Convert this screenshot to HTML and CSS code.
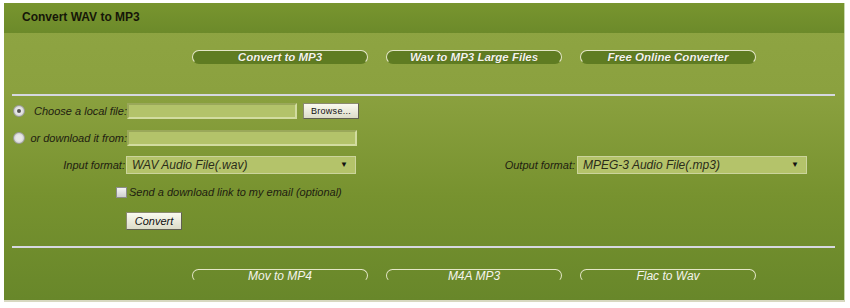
FILE: index.html
```html
<!DOCTYPE html>
<html lang="en">
<head>
    <meta charset="UTF-8">
    <title>Convert WAV to MP3</title>
    <link rel="stylesheet" href="styles.css">
</head>
<body>
    <div class="panel">
        <div class="header">Convert WAV to MP3</div>

        <div class="nav nav-top">
            <a href="#" class="pill">Convert to MP3</a>
            <a href="#" class="pill">Wav to MP3 Large Files</a>
            <a href="#" class="pill">Free Online Converter</a>
        </div>

        <div class="rule"></div>

        <div class="form">
            <div class="row row-file">
                <span class="radio checked"></span>
                <span class="lbl">Choose a local file:</span>
                <span class="field short"></span>
                <span class="btn browse">Browse...</span>
            </div>
            <div class="row row-url">
                <span class="radio"></span>
                <span class="lbl">or download it from:</span>
                <span class="field long"></span>
            </div>
            <div class="row row-format">
                <span class="lbl fmt">Input format:</span>
                <span class="select">WAV Audio File(.wav)<i>&#9660;</i></span>
                <span class="lbl out">Output format:</span>
                <span class="select">MPEG-3 Audio File(.mp3)<i>&#9660;</i></span>
            </div>
            <div class="row row-check">
                <span class="check"></span>
                <span class="lbl">Send a download link to my email (optional)</span>
            </div>
            <div class="row row-submit">
                <span class="btn convert">Convert</span>
            </div>
        </div>

        <div class="rule"></div>

        <div class="nav nav-bottom">
            <a href="#" class="pill">Mov to MP4</a>
            <a href="#" class="pill">M4A MP3</a>
            <a href="#" class="pill">Flac to Wav</a>
        </div>
    </div>
</body>
</html>
```
FILE: styles.css
```css
body {
    margin: 0;
    background-color: #ffffff;
    font-family: 'Liberation Sans', Arial, sans-serif;
}

.panel {
    width: 841px;
    height: 299px;
    margin: 3px 0 0 4px;
    background: linear-gradient(to bottom, #8fa543 0%, #8ba13f 30%, #77922f 65%, #68872a 100%);
    border-right: 1px solid #c8d8b0;
    border-bottom: 2px solid #d8d8c0;
    box-sizing: border-box;
}

.header {
    height: 30px;
    padding-left: 18px;
    line-height: 28px;
    font-size: 12px;
    font-weight: bold;
    color: #161608;
    background: linear-gradient(to bottom, #78952f, #6c8a2a);
}

.nav {
    display: flex;
    gap: 18px;
    padding-left: 188px;
}

.nav-top {
    padding-top: 17px;
    height: 61px;
    box-sizing: border-box;
}

.pill {
    display: block;
    width: 176px;
    height: 14px;
    box-sizing: border-box;
    border: 1px solid #e4e6c8;
    border-bottom-color: transparent;
    border-radius: 9px;
    color: #f4f4ec;
    text-align: center;
    text-decoration: none;
    font-size: 11.5px;
    line-height: 12px;
    font-weight: bold;
    font-style: italic;
}

.nav-top .pill {
    background-color: #5f7c22;
    text-shadow: 0 0 1px #3a4a10;
}

.nav-bottom {
    padding-top: 21px;
}

.nav-bottom .pill {
    font-size: 12px;
    font-weight: normal;
    height: 13px;
}

.rule {
    height: 2px;
    margin: 0 9px 0 8px;
    background-color: #d6d8e0;
}

.form {
    padding: 1px 0 16px 0;
    font-size: 11px;
    font-style: italic;
    color: #1e2010;
}

.row {
    display: flex;
    align-items: center;
}

.row-file,
.row-url {
    height: 27px;
    padding-left: 9px;
}

.radio {
    width: 10px;
    height: 10px;
    border-radius: 50%;
    background: radial-gradient(circle, #e8e8e8 40%, #bcbcbc 100%);
    border: 1px solid #9a9a9a;
    position: relative;
}

.radio.checked::after {
    content: "";
    position: absolute;
    left: 3px;
    top: 3px;
    width: 4px;
    height: 4px;
    border-radius: 50%;
    background-color: #555555;
}

.row-file .lbl,
.row-url .lbl {
    width: 102px;
    text-align: right;
}

.field {
    height: 16px;
    box-sizing: border-box;
    background-color: #b3c36a;
    border: 2px solid #d2dca0;
    border-top-color: #9aa85a;
    border-left-color: #9aa85a;
}

.field.short {
    width: 170px;
}

.field.long {
    width: 230px;
}

.btn {
    display: inline-block;
    box-sizing: border-box;
    background: linear-gradient(to bottom, #fafaf0, #dcdcc8);
    border: 1px solid #8a8a70;
    border-right-color: #606050;
    border-bottom-color: #606050;
    color: #101010;
    text-align: center;
}

.browse {
    width: 56px;
    height: 16px;
    margin-left: 6px;
    font-size: 9px;
    font-style: normal;
    line-height: 14px;
    letter-spacing: 0.3px;
}

.row-format {
    height: 18px;
    margin-top: 5px;
}

.lbl.fmt {
    width: 122px;
    text-align: right;
    padding-right: 1px;
    box-sizing: border-box;
}

.select {
    position: relative;
    width: 230px;
    height: 18px;
    box-sizing: border-box;
    padding-left: 5px;
    line-height: 16px;
    font-size: 12px;
    color: #2a2c18;
    background-color: #b4c36a;
    border: 1px solid #cbd49c;
}

.select i {
    position: absolute;
    right: 7px;
    top: 0;
    font-style: normal;
    font-size: 8px;
    color: #111111;
}

.lbl.out {
    width: 221px;
    text-align: right;
    padding-right: 2px;
    box-sizing: border-box;
}

.row-check {
    height: 16px;
    margin-top: 10px;
    padding-left: 112px;
}

.check {
    width: 9px;
    height: 9px;
    margin-right: 2px;
    background: linear-gradient(to bottom, #f4f4f4, #cfcfcf);
    border: 1px solid #8c8c8c;
}

.row-submit {
    margin-top: 12px;
    padding-left: 122px;
}

.convert {
    width: 56px;
    height: 18px;
    font-size: 11px;
    line-height: 16px;
}
```
